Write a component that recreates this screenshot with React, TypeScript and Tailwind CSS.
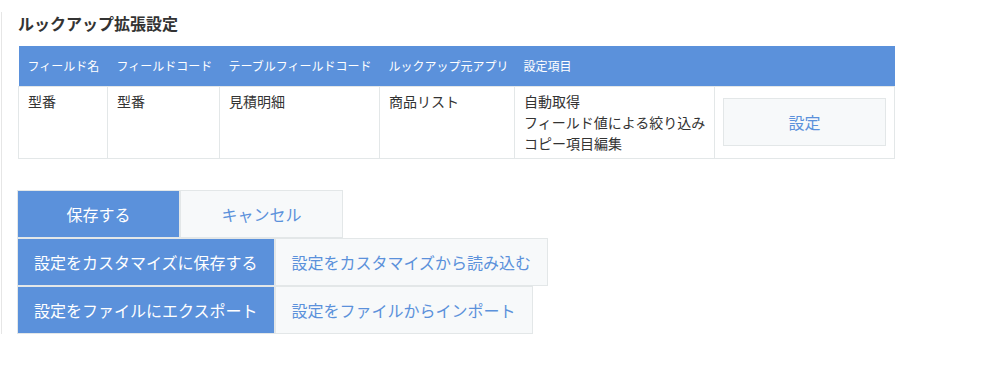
import React from "react";

const columns = [
  { label: "フィールド名", width: "w-[89px]" },
  { label: "フィールドコード", width: "w-[112px]" },
  { label: "テーブルフィールドコード", width: "w-[160px]" },
  { label: "ルックアップ元アプリ", width: "w-[135px]" },
  { label: "設定項目", width: "w-[200px]" },
  { label: "", width: "w-[180px]" },
];

const rows = [
  {
    field: "型番",
    code: "型番",
    table: "見積明細",
    app: "商品リスト",
    items: ["自動取得", "フィールド値による絞り込み", "コピー項目編集"],
  },
];

// kintone plugin style buttons
const btnBase =
  "h-12 min-w-[163px] px-4 border border-[#e3e7e8] text-base flex items-center justify-center whitespace-nowrap shrink-0";
const btnPrimary = `${btnBase} bg-[#5b91db] text-white`;
const btnNormal = `${btnBase} bg-[#f7f9fa] text-[#5b91db]`;

export default function App() {
  return (
    <div
      className="w-[998px] h-[373px] bg-white text-[#333333]"
      style={{ fontFamily: '"Noto Sans CJK JP", "Noto Sans", sans-serif' }}
    >
      <div className="ml-px mt-3 border-l border-[#e6e6e6] pl-4 w-fit">
        <h3 className="text-base font-bold leading-[22px]">ルックアップ拡張設定</h3>

        <table className="mt-3 w-[876px] table-fixed border-collapse">
          <thead>
            <tr className="h-10 bg-[#5b91db] text-white text-xs">
              {columns.map((c, i) => (
                <th key={i} className={`${c.width} px-[9px] text-left font-normal whitespace-nowrap`}>
                  {c.label}
                </th>
              ))}
            </tr>
          </thead>
          <tbody>
            {rows.map((r, i) => (
              <tr key={i} className="h-[72px] text-sm leading-[21px] align-top whitespace-nowrap">
                <td className="border border-[#e3e7e8] px-[9px] pt-[4px]">{r.field}</td>
                <td className="border border-[#e3e7e8] px-[9px] pt-[4px]">{r.code}</td>
                <td className="border border-[#e3e7e8] px-[9px] pt-[4px]">{r.table}</td>
                <td className="border border-[#e3e7e8] px-[9px] pt-[4px]">{r.app}</td>
                <td className="border border-[#e3e7e8] px-[9px] pt-[4px] pb-[3px]">
                  {r.items.map((t) => (
                    <div key={t}>{t}</div>
                  ))}
                </td>
                <td className="border border-[#e3e7e8] px-2 align-middle">
                  <button className="h-12 w-[163px] border border-[#e3e7e8] bg-[#f7f9fa] text-[#5b91db] text-base">
                    設定
                  </button>
                </td>
              </tr>
            ))}
          </tbody>
        </table>

        <div className="mt-[31px] flex flex-col -ml-px">
          <div className="flex">
            <button className={btnPrimary}>保存する</button>
            <button className={btnNormal}>キャンセル</button>
          </div>
          <div className="flex">
            <button className={btnPrimary}>設定をカスタマイズに保存する</button>
            <button className={btnNormal}>設定をカスタマイズから読み込む</button>
          </div>
          <div className="flex">
            <button className={btnPrimary}>設定をファイルにエクスポート</button>
            <button className={btnNormal}>設定をファイルからインポート</button>
          </div>
        </div>
      </div>
    </div>
  );
}
